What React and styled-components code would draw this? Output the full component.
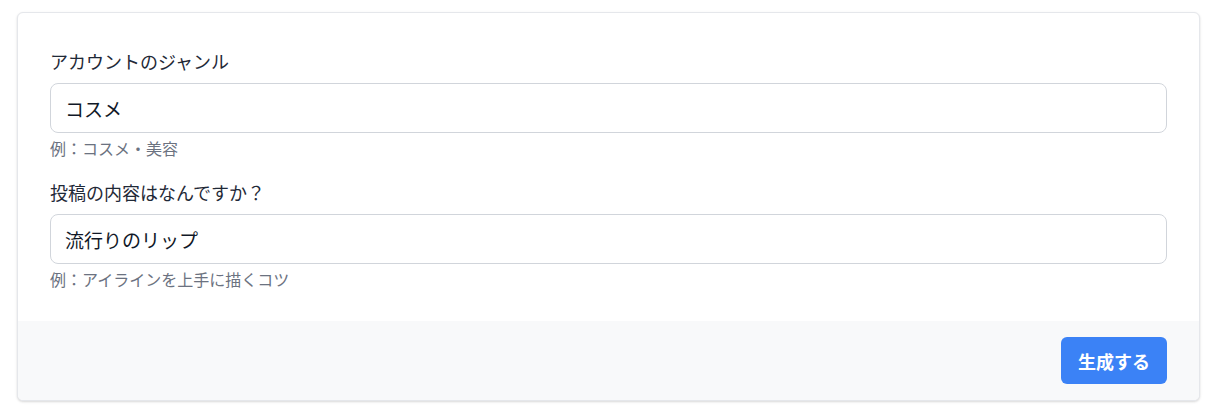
import React, { useState } from 'react';
import styled, { createGlobalStyle } from 'styled-components';

const GlobalStyle = createGlobalStyle`
  body {
    margin: 0;
    background: #ffffff;
    font-family: "Noto Sans CJK JP", "Noto Sans", sans-serif;
    color: #1f2937;
  }
`;

const Page = styled.div`
  padding: 12px 22px 16px 17px;
`;

const Card = styled.form`
  background: #ffffff;
  border: 1px solid #e5e7eb;
  border-radius: 6px;
  box-shadow: 0 1px 3px rgba(0, 0, 0, 0.1), 0 1px 2px rgba(0, 0, 0, 0.06);
  overflow: hidden;
`;

const Body = styled.div`
  display: flex;
  flex-direction: column;
  gap: 19px;
  padding: 34px 32px 31px 32px;
`;

const Field = styled.div`
  display: flex;
  flex-direction: column;
`;

const Label = styled.label`
  font-size: 18px;
  line-height: 28px;
  color: #1f2937;
  margin-bottom: 8px;
`;

const Input = styled.input`
  box-sizing: border-box;
  height: 50px;
  width: 100%;
  padding: 0 14px;
  border: 1px solid #d1d5db;
  border-radius: 8px;
  font-family: inherit;
  font-size: 19px;
  color: #111827;
  outline: none;
`;

const Help = styled.p`
  margin: 4px 0 0;
  font-size: 16px;
  line-height: 22px;
  color: #6b7280;
`;

const Footer = styled.div`
  display: flex;
  justify-content: flex-end;
  padding: 16px 32px 16px;
  background: #f8f9fa;
`;

const Button = styled.button`
  height: 47px;
  padding: 0 17px;
  border: none;
  border-radius: 6px;
  background: #3b82f6;
  color: #ffffff;
  font-family: inherit;
  font-size: 18px;
  font-weight: 700;
  cursor: pointer;
`;

const fields = [
  { id: 'genre', label: 'アカウントのジャンル', value: 'コスメ', help: '例：コスメ・美容' },
  { id: 'topic', label: '投稿の内容はなんですか？', value: '流行りのリップ', help: '例：アイラインを上手に描くコツ' },
];

export default function App() {
  const [values, setValues] = useState(
    Object.fromEntries(fields.map((f) => [f.id, f.value]))
  );

  return (
    <>
      <GlobalStyle />
      <Page>
        <Card onSubmit={(e) => e.preventDefault()}>
          <Body>
            {fields.map((f) => (
              <Field key={f.id}>
                <Label htmlFor={f.id}>{f.label}</Label>
                <Input
                  id={f.id}
                  value={values[f.id]}
                  onChange={(e) => setValues({ ...values, [f.id]: e.target.value })}
                />
                <Help>{f.help}</Help>
              </Field>
            ))}
          </Body>
          <Footer>
            <Button type="submit">生成する</Button>
          </Footer>
        </Card>
      </Page>
    </>
  );
}
